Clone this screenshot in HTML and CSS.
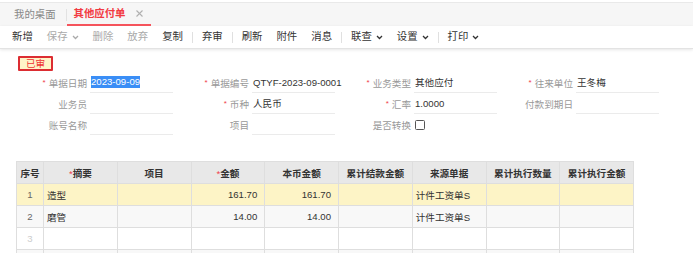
FILE: index.html
```html
<!DOCTYPE html>
<html lang="zh">
<head>
  <meta charset="UTF-8" />
  <title>其他应付单</title>
  <link rel="stylesheet" href="styles.css">
</head>
<body>
  <div class="tabbar">
    <div class="tab">我的桌面</div>
    <div class="tab-sep"></div>
    <div class="tab active">其他应付单
      <svg class="close" width="7" height="7" viewBox="0 0 7 7"><path d="M0.5 0.5L6.5 6.5M6.5 0.5L0.5 6.5" stroke="#b0b0b0" stroke-width="1.1"/></svg>
    </div>
  </div>

  <div class="toolbar">
    <span class="tool">新增</span>
    <span class="tool off">保存<svg class="caret" width="7" height="5" viewBox="0 0 7 5"><path d="M1 1L3.5 3.5L6 1" fill="none" stroke="#aaa" stroke-width="1.3"/></svg></span>
    <span class="tool off">删除</span>
    <span class="tool off">放弃</span>
    <span class="tool">复制</span>
    <span class="sep"></span>
    <span class="tool">弃审</span>
    <span class="sep"></span>
    <span class="tool">刷新</span>
    <span class="tool">附件</span>
    <span class="tool">消息</span>
    <span class="sep"></span>
    <span class="tool">联查<svg class="caret" width="7" height="5" viewBox="0 0 7 5"><path d="M1 1L3.5 3.5L6 1" fill="none" stroke="#333" stroke-width="1.3"/></svg></span>
    <span class="tool">设置<svg class="caret" width="7" height="5" viewBox="0 0 7 5"><path d="M1 1L3.5 3.5L6 1" fill="none" stroke="#333" stroke-width="1.3"/></svg></span>
    <span class="sep"></span>
    <span class="tool">打印<svg class="caret" width="7" height="5" viewBox="0 0 7 5"><path d="M1 1L3.5 3.5L6 1" fill="none" stroke="#333" stroke-width="1.3"/></svg></span>
  </div>

  <div class="form">
    <span class="badge">已审</span>
    <div class="fields">
      <div class="field"><label class="req">单据日期</label><div class="value"><span class="selected">2023-09-09</span></div></div>
      <div class="field"><label class="req">单据编号</label><div class="value">QTYF-2023-09-0001</div></div>
      <div class="field"><label class="req">业务类型</label><div class="value">其他应付</div></div>
      <div class="field"><label class="req">往来单位</label><div class="value">王冬梅</div></div>

      <div class="field"><label>业务员</label><div class="value"></div></div>
      <div class="field"><label class="req">币种</label><div class="value">人民币</div></div>
      <div class="field"><label class="req">汇率</label><div class="value">1.0000</div></div>
      <div class="field"><label>付款到期日</label><div class="value"></div></div>

      <div class="field"><label>账号名称</label><div class="value"></div></div>
      <div class="field"><label>项目</label><div class="value"></div></div>
      <div class="field"><label>是否转换</label><div class="value plain"><span class="checkbox"></span></div></div>
      <div class="field"></div>
    </div>
  </div>

  <table class="grid">
    <thead>
      <tr>
        <th class="seq">序号</th>
        <th><span class="star">*</span>摘要</th>
        <th>项目</th>
        <th><span class="star">*</span>金额</th>
        <th>本币金额</th>
        <th>累计结款金额</th>
        <th>来源单据</th>
        <th>累计执行数量</th>
        <th>累计执行金额</th>
      </tr>
    </thead>
    <tbody>
      <tr class="current">
        <td class="seq">1</td><td>造型</td><td></td><td class="num">161.70</td><td class="num">161.70</td><td></td><td>计件工资单S</td><td></td><td></td>
      </tr>
      <tr class="stripe">
        <td class="seq">2</td><td>磨管</td><td></td><td class="num">14.00</td><td class="num">14.00</td><td></td><td>计件工资单S</td><td></td><td></td>
      </tr>
      <tr>
        <td class="seq empty">3</td><td></td><td></td><td></td><td></td><td></td><td></td><td></td><td></td>
      </tr>
      <tr class="stripe">
        <td class="seq"></td><td></td><td></td><td></td><td></td><td></td><td></td><td></td><td></td>
      </tr>
    </tbody>
  </table>
</body>
</html>
```

FILE: styles.css
```css
body {
  margin: 0;
  background: #fff;
  font-family: "Liberation Sans", "Noto Sans CJK SC", sans-serif;
  color: #333;
}

.tabbar {
  margin-top: 2px;
  height: 23px;
  border-top: 1px solid #e9e9e9;
  background: #f6f6f6;
  display: flex;
  align-items: stretch;
  font-size: 10.4px;
}

.tab {
  display: flex;
  align-items: center;
  color: #888;
  padding: 0 10px 0 14px;
  line-height: 12px;
}

.tab-sep {
  width: 1px;
  margin: 6px 0 5px;
  background: #e2e2e2;
}

.tab.active {
  color: #f23a42;
  font-weight: bold;
  padding: 0 8px 0 7px;
  border-bottom: 2px solid #f5545c;
}

.close {
  margin-left: 10px;
}

.toolbar {
  height: 22px;
  display: flex;
  align-items: center;
  padding-left: 5px;
  background: #fff;
  border-bottom: 1px solid #e3e3e3;
  box-shadow: 0 1px 3px rgba(0, 0, 0, 0.1);
  font-size: 10.4px;
  line-height: 12px;
}

.tool {
  display: flex;
  align-items: center;
  padding: 0 7px;
  color: #333;
}

.tool.off {
  color: #aaa;
}

.caret {
  margin-left: 4px;
}

.sep {
  width: 1px;
  height: 11px;
  margin: 0 2px;
  background: #e0e0e0;
}

.form {
  padding-top: 4px;
}

.badge {
  display: inline-block;
  margin-left: 18px;
  padding: 0 6px;
  height: 11px;
  line-height: 11px;
  font-size: 9.6px;
  color: #e33;
  background: #fff4c8;
  border: 2px solid #dc2d32;
  border-radius: 1px;
}

.fields {
  margin-top: 1px;
  padding-left: 11px;
  display: grid;
  grid-template-columns: repeat(4, 162px);
  grid-auto-rows: 21px;
  font-size: 9.6px;
}

.field {
  display: flex;
}

.field label {
  width: 76px;
  padding-right: 3px;
  text-align: right;
  color: #999;
  display: flex;
  align-items: center;
  justify-content: flex-end;
}

.field label.req::before {
  content: "*";
  color: #f0404a;
  margin-right: 3px;
  font-size: 8px;
}

.value {
  width: 82px;
  padding-left: 1px;
  display: flex;
  align-items: center;
  border-bottom: 1px solid #ebebeb;
  color: #333;
  white-space: nowrap;
}

.value.plain {
  border-bottom: none;
}

.selected {
  background: #3a8ef6;
  color: #fff;
  padding: 1px 0;
  line-height: 10px;
}

.checkbox {
  display: inline-block;
  width: 8px;
  height: 8px;
  border: 1px solid #555;
  border-radius: 1.5px;
  background: #fff;
}

.grid {
  margin: 26px 0 0 16px;
  width: 618px;
  table-layout: fixed;
  border-collapse: collapse;
  font-size: 9.6px;
  color: #333;
}

.grid th,
.grid td {
  height: 21px;
  border: 1px solid #dedede;
  padding: 0 3px;
  white-space: nowrap;
  overflow: hidden;
}

.grid th {
  background: #e8e8e8;
  font-weight: bold;
  text-align: center;
  color: #333;
}

.grid .seq {
  width: 26px;
  padding: 0;
  text-align: center;
}

.grid td.seq {
  color: #666;
}

.grid td.seq.empty {
  color: #ccc;
}

.star {
  color: #f0404a;
  font-weight: normal;
}

.grid td.num {
  text-align: right;
  padding-right: 7px;
}

.grid tr.current td {
  background: #fdf4c6;
}

.grid tr.stripe td {
  background: #f8f8f8;
}
```
